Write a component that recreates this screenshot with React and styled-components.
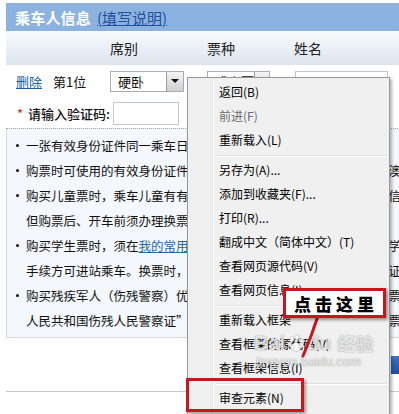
import React from 'react';
import styled, { createGlobalStyle } from 'styled-components';

const GlobalStyle = createGlobalStyle`
  html, body { margin: 0; padding: 0; background: #fff; overflow: hidden; }
  body { font-family: "Noto Sans CJK SC", "Noto Sans", sans-serif; color: #111; }
`;

const CJK = `"Noto Sans CJK SC", "Noto Sans", sans-serif`;

const Page = styled.div`
  position: relative;
  width: 399px;
  height: 414px;
  overflow: hidden;
  background: #fff;
`;

const Form = styled.div`
  width: 640px;
  margin-left: 6px;
  padding-top: 3px;
`;

const TitleBar = styled.div`
  height: 28px;
  background: #8cb3df;
  display: flex;
  align-items: center;
  gap: 6px;
  padding-left: 9px;
`;

const Title = styled.span`
  color: #fff;
  font-weight: 700;
  font-size: 15px;
  letter-spacing: 0.2px;
`;

const TitleLink = styled.a`
  color: #1f4f9d;
  font-size: 15px;
  text-decoration: underline;
`;

const ColumnHeader = styled.div`
  height: 34px;
  display: flex;
  align-items: center;
  padding-left: 104px;
  background: linear-gradient(#f9fbfd, #dbe4ef);
  font-size: 14px;
  color: #222;
`;

const HeadCell = styled.span`
  width: ${(p) => p.$w}px;
`;

const PassengerRow = styled.div`
  height: 32px;
  display: flex;
  align-items: center;
  padding-left: 10px;
  font-size: 13px;
`;

const LinkText = styled.a`
  color: #1a5fa6;
  text-decoration: underline;
  width: ${(p) => p.$w}px;
`;

const Label = styled.span`
  width: ${(p) => p.$w}px;
  color: #111;
`;

const SelectBox = styled.div`
  box-sizing: border-box;
  width: ${(p) => p.$w}px;
  height: 21px;
  margin-right: ${(p) => p.$mr || 0}px;
  border: 1px solid #a6adb6;
  background: #fff;
  display: flex;
  align-items: center;
  justify-content: space-between;
  padding-left: 7px;
  font-size: 13px;
  white-space: nowrap;
  overflow: hidden;
`;

const ArrowButton = styled.span`
  box-sizing: border-box;
  flex: none;
  width: 17px;
  height: 19px;
  border-left: 1px solid #9a9a9a;
  background: linear-gradient(#f4f4f4, #cfcfcf);
  display: flex;
  align-items: center;
  justify-content: center;
  &::after {
    content: '';
    border-left: 4px solid transparent;
    border-right: 4px solid transparent;
    border-top: 4px solid #111;
  }
`;

const TextInput = styled.div`
  box-sizing: border-box;
  width: ${(p) => p.$w}px;
  height: ${(p) => p.$h || 21}px;
  border: 1px solid #c0c6ce;
  background: #fff;
`;

const CaptchaRow = styled.div`
  height: 31px;
  display: flex;
  align-items: center;
  padding-left: 11px;
  padding-top: 2px;
  box-sizing: border-box;
  font-size: 13px;
`;

const Star = styled.span`
  color: #e0141b;
  width: 11px;
  font-size: 13px;
`;

const CaptchaLabel = styled.span`
  font-weight: 500;
  width: 85px;
`;

const InfoPanel = styled.ul`
  margin: 0;
  list-style: none;
  border-top: 1px dotted #9aa4b0;
  border-left: 1px solid #d3d9e1;
  border-bottom: 1px solid #d3d9e1;
  background: #f4f7fc;
  padding: 4px 0 4px 9px;
`;

const InfoLine = styled.li`
  height: 25px;
  line-height: 25px;
  display: flex;
  align-items: center;
  white-space: nowrap;
  font-size: 12.5px;
  color: #111;
  padding-left: ${(p) => (p.$cont ? 10 : 0)}px;
`;

const Bullet = styled.span`
  width: 3px;
  height: 3px;
  border-radius: 50%;
  background: #111;
  margin-right: 7px;
  flex: none;
`;

const InlineLink = styled.a`
  color: #1a6aa8;
  text-decoration: underline;
`;

const ButtonRow = styled.div`
  display: flex;
  padding-left: 385px;
  margin-top: 18px;
`;

const BlueButton = styled.span`
  height: 18px;
  padding: 0 8px;
  background: linear-gradient(#3a73c4, #1e4f9e);
  color: #fff;
  font-size: 12px;
  line-height: 18px;
`;

const Rule = styled.div`
  margin-top: 17px;
  height: 1px;
  background: #c9c9c9;
`;

const Menu = styled.div`
  position: absolute;
  left: 187px;
  top: 77px;
  width: 203px;
  height: 340px;
  box-sizing: border-box;
  padding: 2px 2px;
  background: #f0f0f0;
  border: 1px solid #979797;
  box-shadow: 2px 2px 3px rgba(0, 0, 0, 0.3);
  font-family: ${CJK};
  &::before {
    content: '';
    position: absolute;
    left: 24px;
    top: 2px;
    bottom: 2px;
    width: 1px;
    background: #e2e3e3;
    box-shadow: 1px 0 0 #fff;
  }
`;

const MenuItem = styled.div`
  height: 24px;
  line-height: 24px;
  padding-left: 29px;
  font-size: 12px;
  color: ${(p) => (p.$disabled ? '#6d6d6d' : '#000')};
  white-space: nowrap;
`;

const MenuSeparator = styled.div`
  height: 6px;
  display: flex;
  align-items: center;
  padding-left: 26px;
  &::after {
    content: '';
    flex: 1;
    height: 1px;
    background: #e0e0e0;
    box-shadow: 0 1px 0 #fff;
  }
`;

const Highlight = styled.div`
  position: absolute;
  left: 186px;
  top: 378px;
  width: 118px;
  height: 34px;
  box-sizing: border-box;
  border: 3px solid #c8161d;
  box-shadow: 2px 2px 3px rgba(0, 0, 0, 0.35);
`;

const Callout = styled.div`
  position: absolute;
  left: 283px;
  top: 288px;
  width: 103px;
  height: 30px;
  box-sizing: border-box;
  border: 3px solid #c8161d;
  background: #fff;
  box-shadow: 2px 2px 3px rgba(0, 0, 0, 0.4);
  display: flex;
  align-items: center;
  justify-content: center;
  padding-left: 3px;
  font-family: ${CJK};
  font-weight: 900;
  font-size: 17px;
  letter-spacing: 4px;
  color: #000;
`;

const Pointer = styled.svg`
  position: absolute;
  left: 0;
  top: 0;
  pointer-events: none;
`;

const Watermark = styled.div`
  position: absolute;
  left: 254px;
  top: 332px;
  display: flex;
  flex-direction: column;
  align-items: flex-start;
  color: rgba(255, 255, 255, 0.8);
  text-shadow: 0 0 1px rgba(0, 0, 0, 0.35), 0 0 2px rgba(0, 0, 0, 0.2);
  pointer-events: none;
`;

const WatermarkLogo = styled.div`
  display: flex;
  align-items: center;
  gap: 2px;
  font-family: "Liberation Sans", Arial, sans-serif;
  font-weight: 700;
  font-size: 20px;
  line-height: 22px;
`;

const WatermarkCn = styled.span`
  font-family: ${CJK};
  font-size: 18px;
  margin-left: 4px;
`;

const WatermarkUrl = styled.span`
  font-family: "Liberation Sans", Arial, sans-serif;
  font-size: 13px;
  line-height: 15px;
  margin-left: 2px;
`;

export default function App() {
  return (
    <Page>
      <GlobalStyle />
      <Form>
        <TitleBar>
          <Title>乘车人信息</Title>
          <TitleLink>(填写说明)</TitleLink>
        </TitleBar>
        <ColumnHeader>
          <HeadCell $w={97}>席别</HeadCell>
          <HeadCell $w={87}>票种</HeadCell>
          <HeadCell $w={60}>姓名</HeadCell>
        </ColumnHeader>
        <PassengerRow>
          <LinkText $w={37}>删除</LinkText>
          <Label $w={57}>第1位</Label>
          <SelectBox $w={74} $mr={23}>
            硬卧
            <ArrowButton />
          </SelectBox>
          <SelectBox $w={63} $mr={25}>
            成人票
            <ArrowButton />
          </SelectBox>
          <TextInput $w={93} />
        </PassengerRow>
        <CaptchaRow>
          <Star>*</Star>
          <CaptchaLabel>请输入验证码:</CaptchaLabel>
          <TextInput $w={66} $h={23} />
        </CaptchaRow>
        <InfoPanel>
          <InfoLine>
            <Bullet />
            一张有效身份证件同一乘车日期同一车次只能购买一张车票。
          </InfoLine>
          <InfoLine>
            <Bullet />
            购票时可使用的有效身份证件为：中华人民共和国居民身份证、港澳居民来往内地通行证
          </InfoLine>
          <InfoLine>
            <Bullet />
            购买儿童票时，乘车儿童有有效身份证件的，请填写本人身份证件信息；
          </InfoLine>
          <InfoLine $cont>但购票后、开车前须办理换票手续方可进站乘车。</InfoLine>
          <InfoLine>
            <Bullet />
            购买学生票时，须在<InlineLink>我的常用联系人</InlineLink>中填写、登录学生详细信息，学生票乘车时间限为
          </InfoLine>
          <InfoLine $cont>手续方可进站乘车。换票时，新生凭录取通知书，毕业生凭学校的证明，</InfoLine>
          <InfoLine>
            <Bullet />
            购买残疾军人（伤残警察）优待票的，须在购票后、开车前办理换票手续
          </InfoLine>
          <InfoLine $cont>人民共和国伤残人民警察证”的旅客，须在购票后、开车前办理换票［手续］</InfoLine>
        </InfoPanel>
        <ButtonRow>
          <BlueButton>选择</BlueButton>
        </ButtonRow>
        <Rule />
      </Form>

      <Menu>
        <MenuItem>返回(B)</MenuItem>
        <MenuItem $disabled>前进(F)</MenuItem>
        <MenuItem>重新载入(L)</MenuItem>
        <MenuSeparator />
        <MenuItem>另存为(A)...</MenuItem>
        <MenuItem>添加到收藏夹(F)...</MenuItem>
        <MenuItem>打印(R)...</MenuItem>
        <MenuItem>翻成中文（简体中文）(T)</MenuItem>
        <MenuItem>查看网页源代码(V)</MenuItem>
        <MenuItem>查看网页信息(I)</MenuItem>
        <MenuSeparator />
        <MenuItem>重新载入框架</MenuItem>
        <MenuItem>查看框架的源代码(V)</MenuItem>
        <MenuItem>查看框架信息(I)</MenuItem>
        <MenuSeparator />
        <MenuItem>审查元素(N)</MenuItem>
      </Menu>

      <Watermark>
        <WatermarkLogo>
          <span>Bai</span>
          <svg width="18" height="18" viewBox="0 0 18 18">
            <g fill="rgba(255,255,255,0.85)" stroke="rgba(0,0,0,0.25)" strokeWidth="0.6">
              <ellipse cx="5" cy="5" rx="2" ry="2.6" />
              <ellipse cx="10" cy="3.5" rx="2" ry="2.6" />
              <ellipse cx="14.5" cy="7" rx="1.8" ry="2.3" />
              <ellipse cx="2.5" cy="10" rx="1.8" ry="2.3" />
              <path d="M9 8 C5 9 3 14 5 16 C7 17.5 11 17.5 13 16 C15 14 13 9 9 8 Z" />
            </g>
          </svg>
          <span>du</span>
          <WatermarkCn>经验</WatermarkCn>
        </WatermarkLogo>
        <WatermarkUrl>jingyan.baidu.com</WatermarkUrl>
      </Watermark>

      <Highlight />
      <Pointer width="399" height="414">
        <path d="M318 316 L311 336 L303 356" stroke="#c8161d" strokeWidth="3" fill="none" strokeLinecap="round" />
      </Pointer>
      <Callout>点击这里</Callout>
    </Page>
  );
}
